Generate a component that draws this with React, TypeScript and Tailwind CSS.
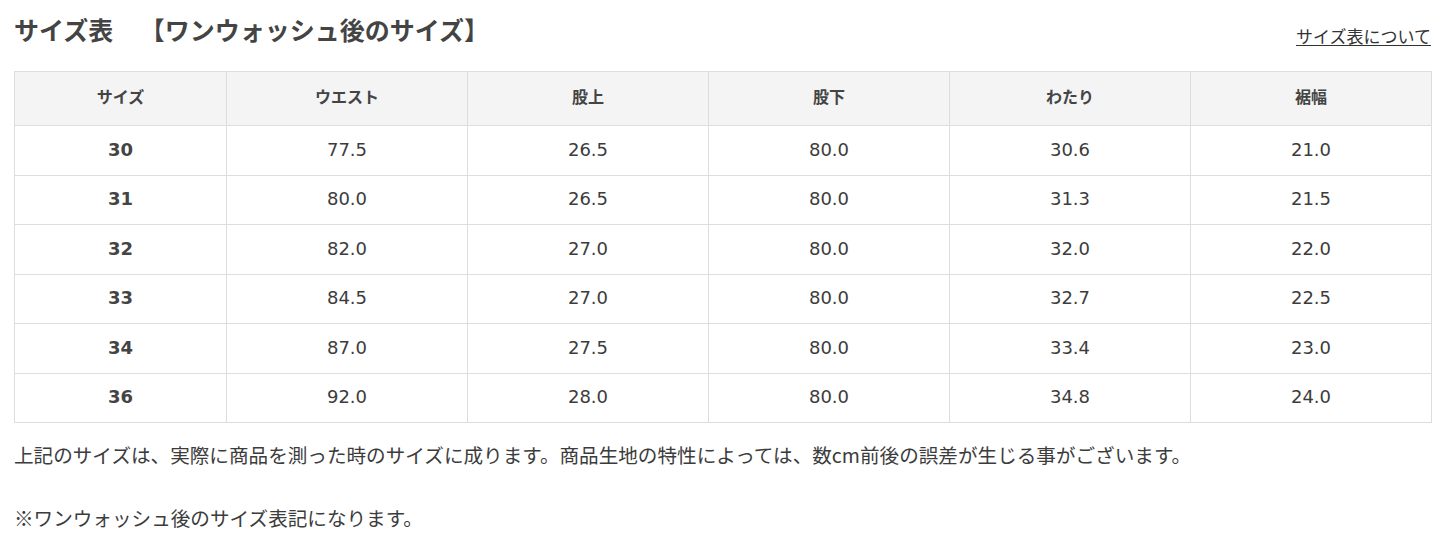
const headers = ['サイズ', 'ウエスト', '股上', '股下', 'わたり', '裾幅'];

const rows: string[][] = [
  ['30', '77.5', '26.5', '80.0', '30.6', '21.0'],
  ['31', '80.0', '26.5', '80.0', '31.3', '21.5'],
  ['32', '82.0', '27.0', '80.0', '32.0', '22.0'],
  ['33', '84.5', '27.0', '80.0', '32.7', '22.5'],
  ['34', '87.0', '27.5', '80.0', '33.4', '23.0'],
  ['36', '92.0', '28.0', '80.0', '34.8', '24.0'],
];

export default function App() {
  return (
    <div className="min-h-[548px] bg-white px-[14px] text-[#3c3c3c] font-['Noto_Sans_CJK_JP',sans-serif]">
      {/* Title bar */}
      <div className="flex h-[71px] justify-between">
        <h1 className="pt-[11px] text-[25px] font-bold leading-[36px] text-[#444]">
          <span>サイズ表</span>
          <span className="ml-[14px]">　【ワンウォッシュ後のサイズ】</span>
        </h1>
        <a href="#" className="pt-[24px] text-[17px] leading-[24px] text-[#333] underline underline-offset-2">
          サイズ表について
        </a>
      </div>

      {/* Size table */}
      <table className="w-[1417px] table-fixed border-collapse border border-[#dddddd]">
        <colgroup>
          <col className="w-[212px]" />
          <col className="w-[241px]" />
          <col className="w-[241px]" />
          <col className="w-[241px]" />
          <col className="w-[241px]" />
          <col className="w-[241px]" />
        </colgroup>
        <thead>
          <tr className="h-[54px] bg-[#f4f4f4]">
            {headers.map(h => (
              <th key={h} className="border border-[#dddddd] p-0 pb-[5px] text-center text-[16px] font-bold text-[#444]">
                {h}
              </th>
            ))}
          </tr>
        </thead>
        <tbody>
          {rows.map(r => (
            <tr key={r[0]} className="h-[49.5px]">
              {r.map((v, i) => (
                <td
                  key={i}
                  className={`border border-[#dddddd] p-0 pb-[2px] text-center text-[18px] font-['DejaVu_Sans',sans-serif] ${
                    i === 0 ? 'font-bold text-[#444]' : 'text-[#3c3c3c]'
                  }`}
                >
                  {v}
                </td>
              ))}
            </tr>
          ))}
        </tbody>
      </table>

      {/* Notes */}
      <p className="mt-[16px] text-[19.6px] leading-[32px]">
        上記のサイズは、実際に商品を測った時のサイズに成ります。商品生地の特性によっては、数cm前後の誤差が生じる事がございます。
      </p>
      <p className="mt-[31px] text-[19.6px] leading-[32px]">※ワンウォッシュ後のサイズ表記になります。</p>
    </div>
  );
}
